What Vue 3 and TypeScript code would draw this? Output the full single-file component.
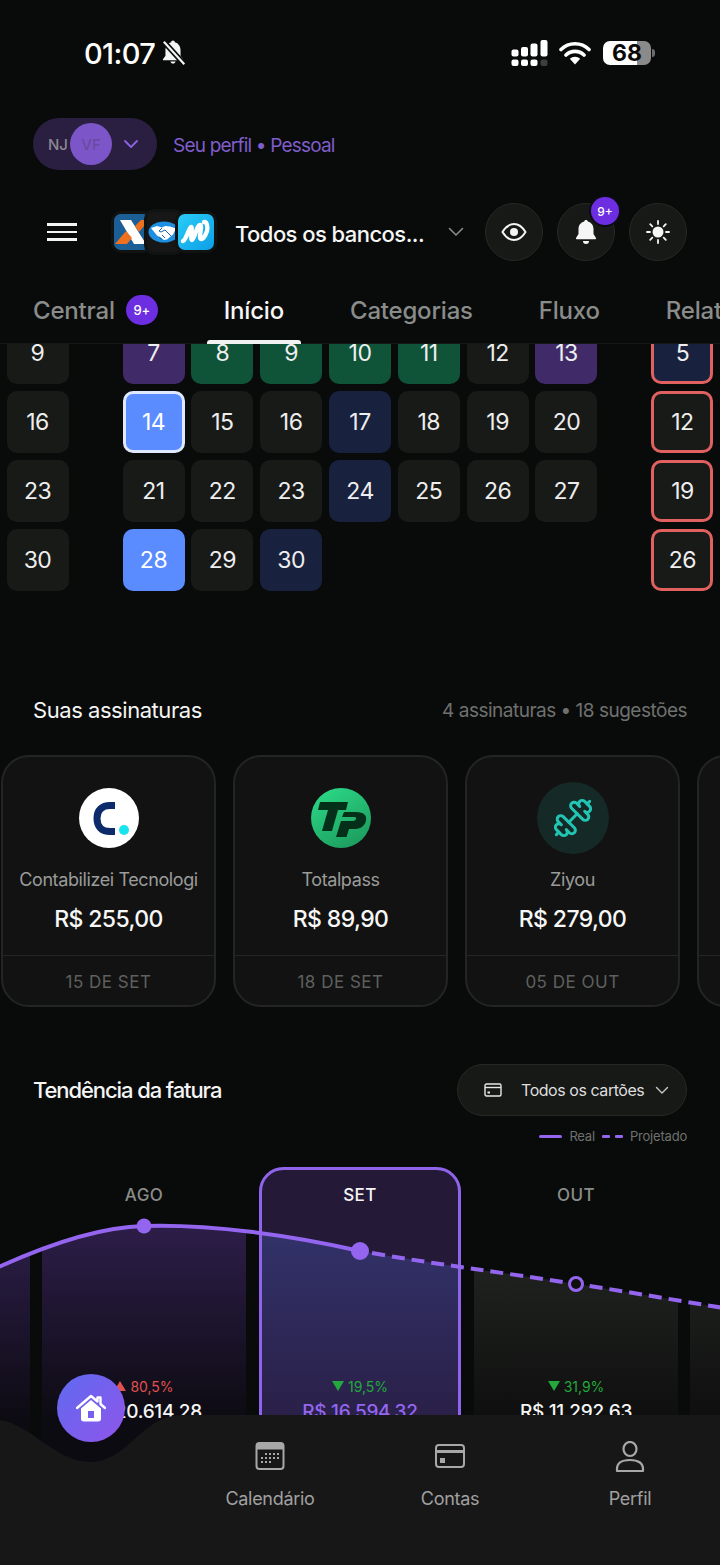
<script setup lang="ts">
interface Cell { n: number; tone?: string }
const leftCol: Cell[] = [{ n: 9 }, { n: 16 }, { n: 23 }, { n: 30 }]
const midCol: Cell[] = [
  { n: 7, tone: 'purple' }, { n: 8, tone: 'green' }, { n: 9, tone: 'green' }, { n: 10, tone: 'green' },
  { n: 11, tone: 'green' }, { n: 12 }, { n: 13, tone: 'purple' },
  { n: 14, tone: 'today' }, { n: 15 }, { n: 16 }, { n: 17, tone: 'navy' }, { n: 18 }, { n: 19 }, { n: 20 },
  { n: 21 }, { n: 22 }, { n: 23 }, { n: 24, tone: 'navy' }, { n: 25 }, { n: 26 }, { n: 27 },
  { n: 28, tone: 'blue' }, { n: 29 }, { n: 30, tone: 'navy' }
]
const rightCol: Cell[] = [
  { n: 5, tone: 'navy due' }, { n: 12, tone: 'due' }, { n: 19, tone: 'due' }, { n: 26, tone: 'due' }
]
const tabs = ['Início', 'Categorias', 'Fluxo', 'Relatórios']
const subs = [
  { kind: 'c', name: 'Contabilizei Tecnologi', price: 'R$ 255,00', date: '15 DE SET' },
  { kind: 'tp', name: 'Totalpass', price: 'R$ 89,90', date: '18 DE SET' },
  { kind: 'gym', name: 'Ziyou', price: 'R$ 279,00', date: '05 DE OUT' },
  { kind: '', name: '', price: '', date: '' }
]
const months = [
  { label: 'AGO', pct: '80,5%', up: true, value: 'R$ 20.614,28', sel: false },
  { label: 'SET', pct: '19,5%', up: false, value: 'R$ 16.594,32', sel: true },
  { label: 'OUT', pct: '31,9%', up: false, value: 'R$ 11.292,63', sel: false }
]
</script>

<template>
  <div class="screen">
    <header class="head">
      <div class="status">
        <div class="status-left">
          <span class="clock">01:07</span>
          <svg class="mute" width="30" height="28" viewBox="0 0 26 26">
            <path d="M13 1.500c-1 0-1.600.7-1.700 1.600C7.900 4 6 7 6 10.500v5l-2.300 3.200c-.3.5 0 1.100.6 1.100h17.400c.6 0 .9-.6.6-1.100L20 15.500v-5c0-3.500-1.900-6.500-5.300-7.400-.1-.9-.7-1.600-1.700-1.600z" fill="#f4f4f4"/>
            <path d="M10.500 21a2.600 2.600 0 0 0 5 0z" fill="#f4f4f4"/>
            <path d="M4 2l20 22" stroke="#0a0b0a" stroke-width="5"/>
            <path d="M4.500 2.500l19 21" stroke="#f4f4f4" stroke-width="2"/>
          </svg>
        </div>
        <div class="status-right">
          <svg width="37" height="26" viewBox="0 0 37 26">
            <g fill="#fff">
              <rect x="0.500" y="9.500" width="7" height="7" rx="2"/>
              <rect x="10" y="7" width="7" height="9.500" rx="2"/>
              <rect x="19.500" y="3.500" width="7" height="13" rx="2"/>
              <rect x="29.500" y="0" width="7" height="16.500" rx="2"/>
              <rect x="0.500" y="19.500" width="7" height="6.500" rx="2"/>
              <rect x="10" y="19.500" width="7" height="6.500" rx="2"/>
              <rect x="19.500" y="19.500" width="7" height="6.500" rx="2"/>
            </g>
            <rect x="29.500" y="19.500" width="7" height="6.500" rx="2" fill="#3e3e3e"/>
          </svg>
          <svg class="wifi" width="32" height="24" viewBox="0 0 32 24">
            <path d="M2 8.500a20 20 0 0 1 28 0M7 14a13 13 0 0 1 18 0" fill="none" stroke="#fff" stroke-width="3.600" stroke-linecap="round"/>
            <path d="M10.800 17.800a7.600 7.600 0 0 1 10.400 0L16 23.500z" fill="#fff"/>
          </svg>
          <div class="battery">
            <span class="battery-num">68</span>
          </div>
          <span class="battery-tip"></span>
        </div>
      </div>

      <div class="profile">
        <div class="profile-pill">
          <span class="initials">NJ</span>
          <span class="avatar">VF</span>
          <svg width="16" height="10" viewBox="0 0 16 10"><path d="M2 2l6 6 6-6" fill="none" stroke="#8d63e6" stroke-width="1.800" stroke-linecap="round" stroke-linejoin="round"/></svg>
        </div>
        <span class="profile-text">Seu perfil • Pessoal</span>
      </div>

      <div class="topbar">
        <div class="burger"><i></i><i></i><i></i></div>
        <div class="banks">
          <span class="bank bank-x">
            <svg width="36" height="36" viewBox="0 0 36 36">
              <rect width="36" height="36" rx="7" fill="#1c5f96"/>
              <path d="M6 6h11l15 24H20z" fill="#fff"/>
              <path d="M1 30l11-13 6 7-5 6z" fill="#f0701e"/>
              <path d="M21 12l6-6h8L25 18z" fill="#f0701e"/>
            </svg>
          </span>
          <span class="bank bank-mp">
            <svg width="32" height="22" viewBox="0 0 32 22">
              <ellipse cx="16" cy="11" rx="15.500" ry="10.500" fill="#1e8fe0"/>
              <path d="M3 7l6-2 5 1.500 3-1.500 5 .5 6 2-3 6-6 5-3 .5-7-4.500z" fill="#fff"/>
              <path d="M14 7l-3 3 2 1 4-2 6 6M11 16l3 2M14 14l3 3" fill="none" stroke="#1c5fa8" stroke-width="1"/>
            </svg>
          </span>
          <span class="bank bank-n">
            <svg width="36" height="36" viewBox="0 0 36 36">
              <path d="M5 27c3-1 6-13 8-14s-1 13 1 13 5-15 8-15-2 14 1 14 5-5 6-8 0-10-3-9" fill="none" stroke="#fff" stroke-width="4.400" stroke-linecap="round" stroke-linejoin="round"/>
            </svg>
          </span>
        </div>
        <span class="bank-label">Todos os bancos...</span>
        <svg class="bank-chev" width="16" height="10" viewBox="0 0 16 10"><path d="M1.500 1.500L8 8l6.500-6.500" fill="none" stroke="#8d8f8d" stroke-width="1.500" stroke-linecap="round" stroke-linejoin="round"/></svg>
        <div class="round">
          <svg width="26" height="20" viewBox="0 0 26 20">
            <path d="M1.500 10C4.500 5 8.500 2 13 2s8.500 3 11.500 8c-3 5-7 8-11.500 8S4.500 15 1.500 10z" fill="none" stroke="#f4f4f4" stroke-width="2"/>
            <circle cx="13" cy="10" r="4" fill="#f4f4f4"/>
          </svg>
        </div>
        <div class="round bell-wrap">
          <svg width="24" height="26" viewBox="0 0 24 26">
            <path d="M12 1c-1 0-1.700.7-1.800 1.500C6.500 3.500 4.500 6.500 4.500 10v5L2 19c-.3.600 0 1.200.7 1.200h18.600c.7 0 1-.6.700-1.200l-2.500-4v-5c0-3.500-2-6.500-5.700-7.500C13.700 1.700 13 1 12 1z" fill="#f6f6f6"/>
            <path d="M9 22a3 3 0 0 0 6 0z" fill="#f6f6f6"/>
          </svg>
          <span class="bell-badge">9+</span>
        </div>
        <div class="round">
          <svg width="24" height="24" viewBox="0 0 24 24">
            <circle cx="12" cy="12" r="5.500" fill="#f6f6f6"/>
            <path d="M12 1v3M12 20v3M1 12h3M20 12h3M4.200 4.200l2.100 2.100M17.700 17.700l2.100 2.100M4.200 19.800l2.100-2.100M17.700 6.300l2.100-2.100" stroke="#f6f6f6" stroke-width="1.800" stroke-linecap="round"/>
          </svg>
        </div>
      </div>

      <nav class="tabs">
        <div class="tab">Central <span class="tab-badge">9+</span></div>
        <div v-for="(t, i) in tabs" :key="t" class="tab" :class="{ active: i === 0 }">{{ t }}</div>
      </nav>
    </header>

    <main class="body">
      <section class="calendar">
        <div class="cal-side">
          <div v-for="c in leftCol" :key="c.n" class="cell">{{ c.n }}</div>
        </div>
        <div class="cal-mid">
          <div v-for="c in midCol" :key="c.n" class="cell" :class="c.tone">{{ c.n }}</div>
        </div>
        <div class="cal-side">
          <div v-for="c in rightCol" :key="c.n" class="cell" :class="c.tone">{{ c.n }}</div>
        </div>
      </section>

      <div class="subs-head">
        <h2 class="title">Suas assinaturas</h2>
        <span class="subs-count">4 assinaturas • 18 sugestões</span>
      </div>

      <div class="subs">
        <article v-for="(s, i) in subs" :key="i" class="sub">
          <div class="sub-top">
            <div class="logo-slot">
              <svg v-if="s.kind === 'c'" width="60" height="60" viewBox="0 0 60 60">
                <circle cx="30" cy="30" r="30" fill="#fff"/>
                <path d="M36 17.500h-5c-8 0-13 4.500-13 13s5 13 13 13h5" fill="none" stroke="#0d2a6b" stroke-width="7"/>
                <circle cx="45" cy="42" r="5" fill="#19e3ee"/>
              </svg>
              <svg v-else-if="s.kind === 'tp'" width="60" height="60" viewBox="0 0 60 60">
                <defs>
                  <linearGradient id="tpg" x1="0.200" y1="0" x2="0.800" y2="1">
                    <stop offset="0" stop-color="#2bd886"/>
                    <stop offset="1" stop-color="#1c9a5c"/>
                  </linearGradient>
                </defs>
                <circle cx="30" cy="30" r="30" fill="url(#tpg)"/>
                <path d="M9 14h28l-2 8h-8l-6 21H11l6-21H7z" fill="#04301a"/>
                <path d="M33 24h12c8 0 11 3.500 10 8.500-1 6-6 8.500-12 8.500h-5l-2.500 8H25l5-16h11c2 0 3.500-.6 4-2 .4-1.500-.5-2-2-2H31z" fill="#04301a"/>
              </svg>
              <div v-else-if="s.kind === 'gym'" class="gym">
                <svg width="42" height="42" viewBox="0 0 24 24" fill="none" stroke="#22c5b4" stroke-width="1.700" stroke-linecap="round" stroke-linejoin="round">
                  <g transform="translate(24 0) scale(-1 1)">
                    <path d="M14.400 14.400L9.600 9.600"/>
                    <path d="M18.657 21.485a2 2 0 1 1-2.829-2.828l-1.767 1.768a2 2 0 1 1-2.829-2.829l6.364-6.364a2 2 0 1 1 2.829 2.829l-1.768 1.767a2 2 0 1 1 2.828 2.829z"/>
                    <path d="M21.500 21.500l-1.400-1.400"/>
                    <path d="M3.900 3.900L2.500 2.500"/>
                    <path d="M6.404 12.768a2 2 0 1 1-2.829-2.829l1.768-1.767a2 2 0 1 1-2.828-2.829l2.828-2.828a2 2 0 1 1 2.829 2.828l1.767-1.768a2 2 0 1 1 2.829 2.829z"/>
                  </g>
                </svg>
              </div>
            </div>
            <div class="sub-name">{{ s.name }}</div>
            <div class="sub-price">{{ s.price }}</div>
          </div>
          <div class="sub-date">{{ s.date }}</div>
        </article>
      </div>

      <div class="trend-head">
        <h2 class="title trend-title">Tendência da fatura</h2>
        <div class="card-select">
          <svg class="cs-icon" width="18" height="14" viewBox="0 0 18 14" fill="none">
            <rect x="1" y="1" width="16" height="12" rx="1.500" stroke="#e8e8e8" stroke-width="1.400"/>
            <path d="M1 4.500h16" stroke="#e8e8e8" stroke-width="1.400"/>
            <rect x="3.500" y="8.500" width="2.500" height="2" fill="#e8e8e8"/>
          </svg>
          <span>Todos os cartões</span>
          <svg class="cs-icon" width="14" height="9" viewBox="0 0 14 9"><path d="M1.500 1.500L7 7l5.500-5.500" fill="none" stroke="#c8c8c8" stroke-width="1.400" stroke-linecap="round" stroke-linejoin="round"/></svg>
        </div>
      </div>

      <div class="legend">
        <i class="lg-solid"></i><span>Real</span>
        <i class="lg-dash"></i><i class="lg-dash"></i><span>Projetado</span>
      </div>

      <section class="chart">
        <svg class="chart-svg" width="720" height="300" viewBox="0 0 720 300">
          <defs>
            <clipPath id="under">
              <path d="M-10 104C50 76 100 60 144 59C210 57 290 68 360 84C440 98 500 105 576 117C630 125 680 134 730 142V300H-10z"/>
            </clipPath>
            <linearGradient id="gPurple" x1="0" y1="0" x2="0" y2="1">
              <stop offset="0" stop-color="#2d1e4a"/>
              <stop offset="0.800" stop-color="#0d0b12"/>
            </linearGradient>
            <linearGradient id="gSel" x1="0" y1="0" x2="0" y2="1">
              <stop offset="0" stop-color="#32326a"/>
              <stop offset="0.800" stop-color="#2a2048"/>
            </linearGradient>
            <linearGradient id="gGrey" x1="0" y1="0" x2="0" y2="1">
              <stop offset="0" stop-color="#212321"/>
              <stop offset="0.800" stop-color="#0d0e0d"/>
            </linearGradient>
          </defs>
          <rect x="259" y="0" width="202" height="320" rx="24" fill="#241a38"/>
          <g clip-path="url(#under)">
            <rect x="0" y="60" width="30" height="240" fill="url(#gPurple)"/>
            <rect x="42" y="55" width="204" height="245" fill="url(#gPurple)"/>
            <rect x="260" y="60" width="200" height="240" fill="url(#gSel)"/>
            <rect x="474" y="90" width="204" height="210" fill="url(#gGrey)"/>
            <rect x="690" y="90" width="30" height="210" fill="url(#gGrey)"/>
          </g>
          <rect x="260.500" y="1.500" width="199" height="320" rx="23" fill="none" stroke="#8f63ea" stroke-width="3"/>
          <path d="M-10 104C50 76 100 60 144 59C210 57 290 68 360 84" fill="none" stroke="#9466f0" stroke-width="4"/>
          <path d="M372 86C440 98 500 105 576 117C630 125 680 134 730 142" fill="none" stroke="#9466f0" stroke-width="4" stroke-dasharray="13 7"/>
          <circle cx="144" cy="59" r="7.500" fill="#9466f0"/>
          <circle cx="360" cy="84" r="9" fill="#9466f0"/>
          <circle cx="576" cy="117" r="6.500" fill="#0e0f0e" stroke="#9466f0" stroke-width="3"/>
        </svg>
        <div class="months">
          <div v-for="m in months" :key="m.label" class="month" :class="{ sel: m.sel }">
            <div class="m-label">{{ m.label }}</div>
            <div class="m-pct" :class="m.up ? 'up' : 'down'">
              <i class="tri"></i>{{ m.pct }}
            </div>
            <div class="m-value">{{ m.value }}</div>
          </div>
        </div>
      </section>
    </main>

    <footer class="nav">
      <svg class="nav-bg" width="720" height="150" viewBox="0 0 720 150">
        <path d="M0 5C32 10 56 47 90 47C128 47 142 0 182 0H720V150H0z" fill="#171717"/>
      </svg>
      <button class="fab" type="button" aria-label="Início">
        <svg width="30" height="28" viewBox="0 0 30 28">
          <path d="M1 14L15 2l6.500 5.500V3.500h3v6.500L29 14" fill="none" stroke="#fff" stroke-width="2.400" stroke-linecap="round" stroke-linejoin="round"/>
          <path fill-rule="evenodd" d="M15 6l10 8.500V25c0 1.500-1 2.500-2.500 2.500h-15C6 27.500 5 26.500 5 25V14.500zM12 17v7h6v-7z" fill="#fff"/>
        </svg>
      </button>
      <div class="nav-items">
        <div class="nav-item">
          <svg width="30" height="30" viewBox="0 0 30 30" fill="none">
            <rect x="1.500" y="2" width="27" height="26" rx="3" stroke="#a8a8a8" stroke-width="2"/>
            <path d="M1.500 5a3 3 0 0 1 3-3h21a3 3 0 0 1 3 3v3.500h-27z" fill="#a8a8a8"/>
            <g fill="#a8a8a8">
              <rect x="10" y="12" width="2" height="2"/><rect x="14" y="12" width="2" height="2"/><rect x="18" y="12" width="2" height="2"/><rect x="22" y="12" width="2" height="2"/>
              <rect x="6" y="16" width="2" height="2"/><rect x="10" y="16" width="2" height="2"/><rect x="14" y="16" width="2" height="2"/><rect x="18" y="16" width="2" height="2"/><rect x="22" y="16" width="2" height="2"/>
              <rect x="6" y="20" width="2" height="2"/><rect x="10" y="20" width="2" height="2"/><rect x="14" y="20" width="2" height="2"/>
            </g>
          </svg>
          <span>Calendário</span>
        </div>
        <div class="nav-item">
          <svg width="30" height="30" viewBox="0 0 30 30" fill="none">
            <rect x="1" y="4" width="28" height="22" rx="3" stroke="#a8a8a8" stroke-width="2"/>
            <path d="M1 10.500h28" stroke="#a8a8a8" stroke-width="3"/>
            <rect x="5" y="17" width="5" height="5" fill="#a8a8a8"/>
          </svg>
          <span>Contas</span>
        </div>
        <div class="nav-item">
          <svg width="30" height="32" viewBox="0 0 30 32" fill="none">
            <ellipse cx="15" cy="8" rx="6.500" ry="7" stroke="#a8a8a8" stroke-width="2.200"/>
            <path d="M2 30v-2c0-6 5-9 13-9s13 3 13 9v2z" stroke="#a8a8a8" stroke-width="2.200" stroke-linejoin="round"/>
          </svg>
          <span>Perfil</span>
        </div>
      </div>
    </footer>
  </div>
</template>

<style>
html, body { margin: 0; background: #090b0a; }
</style>

<style scoped>
.screen {
  position: relative;
  width: 720px;
  height: 1565px;
  overflow: hidden;
  background: #090b0a;
  color: #f4f4f4;
  font-family: "Inter", "Liberation Sans", sans-serif;
  display: flex;
  flex-direction: column;
}
.head {
  height: 344px;
  flex: none;
  border-bottom: 1px solid #151715;
  box-sizing: border-box;
  display: flex;
  flex-direction: column;
  position: relative;
  z-index: 2;
  background: #090b0a;
}
.status {
  height: 106px;
  flex: none;
  display: flex;
  align-items: center;
  justify-content: space-between;
  padding: 0 65px 0 84px;
}
.status-left { display: flex; align-items: center; gap: 3px; }
.clock { font-size: 29px; font-weight: 500; letter-spacing: -0.6px; color: #fff; }
.status-right { display: flex; align-items: center; }
.wifi { margin-left: 11px; }
.battery {
  margin-left: 12px;
  width: 48px;
  height: 24px;
  border-radius: 7px;
  background: linear-gradient(90deg, #fff 0 70%, #8a8a8a 70% 100%);
  display: flex;
  align-items: center;
  justify-content: center;
}
.battery-num { color: #0a0a0a; font-size: 23px; font-weight: 700; line-height: 24px; }
.battery-tip { width: 3px; height: 8px; margin-left: 1px; border-radius: 0 3px 3px 0; background: #6b6b6b; }

.profile { height: 52px; margin-top: 12px; padding-left: 33px; display: flex; align-items: center; flex: none; }
.profile-pill {
  width: 124px;
  height: 52px;
  border-radius: 26px;
  background: #2a1f40;
  display: flex;
  align-items: center;
  box-sizing: border-box;
  padding-left: 15px;
  flex: none;
}
.initials { font-size: 15px; font-weight: 500; color: #8c8794; width: 22px; }
.avatar {
  width: 42px;
  height: 42px;
  border-radius: 50%;
  background: #7c56c8;
  color: #6a4a9f;
  font-size: 15px;
  font-weight: 500;
  display: flex;
  align-items: center;
  justify-content: center;
  margin-right: 11px;
}
.profile-text { margin-left: 16px; padding-top: 2px; font-size: 19px; color: #7f5dcb; letter-spacing: -0.8px; white-space: nowrap; }

.topbar { height: 58px; margin-top: 33px; display: flex; align-items: center; flex: none; padding-left: 47px; }
.burger { width: 30px; display: flex; flex-direction: column; gap: 5px; flex: none; }
.burger i { height: 2.500px; background: #f4f4f4; display: block; }
.banks { display: flex; align-items: center; margin-left: 34px; flex: none; width: 106px; height: 58px; }
.bank {
  width: 36px;
  height: 36px;
  border-radius: 10px;
  border: 3px solid #111312;
  display: flex;
  align-items: center;
  justify-content: center;
  overflow: hidden;
  flex: none;
}
.bank-x { background: #1c5f96; position: relative; z-index: 1; }
.bank-mp { background: #161716; margin-left: -9px; width: 34px; height: 40px; position: relative; z-index: 2; }
.bank-n { background: linear-gradient(135deg, #29cdf6, #0d9ee8); margin-left: -9px; position: relative; z-index: 3; }
.bank-label { margin-left: 18px; padding-top: 3px; width: 190px; font-size: 22px; font-weight: 500; white-space: nowrap; flex: none; letter-spacing: -0.55px; color: #f7f7f7; }
.bank-chev { margin-left: 23px; flex: none; }
.round {
  width: 58px;
  height: 58px;
  box-sizing: border-box;
  border-radius: 50%;
  background: #171917;
  border: 1px solid #262826;
  display: flex;
  align-items: center;
  justify-content: center;
  margin-left: 14px;
  flex: none;
  position: relative;
}
.bank-chev + .round { margin-left: 21px; }
.bell-badge {
  position: absolute;
  top: -7px;
  right: -5px;
  width: 28px;
  height: 28px;
  border-radius: 50%;
  background: #6c2ee0;
  color: #fff;
  font-size: 12px;
  font-weight: 500;
  display: flex;
  align-items: center;
  justify-content: center;
  box-shadow: 0 0 0 2px #0c0c14;
}

.tabs { height: 83px; display: flex; gap: 32px; padding-left: 16px; overflow: hidden; flex: none; margin-bottom: -1px; }
.tab {
  position: relative;
  padding: 0 17px;
  height: 83px;
  display: flex;
  align-items: center;
  font-size: 24px;
  font-weight: 500;
  color: #8a8c8a;
  white-space: nowrap;
  padding-top: 15px;
  box-sizing: border-box;
  letter-spacing: -0.2px;
  flex: none;
}
.tab.active { color: #f7f7f7; }
.tab.active::after {
  content: "";
  position: absolute;
  left: 0;
  right: 0;
  bottom: 0;
  height: 4px;
  border-radius: 3px 3px 0 0;
  background: #f2f2f2;
}
.tab-badge {
  margin-left: 11px;
  width: 32px;
  height: 30px;
  border-radius: 15px;
  background: #6c2ee0;
  color: #fff;
  font-size: 13px;
  font-weight: 500;
  display: flex;
  align-items: center;
  justify-content: center;
}

.body { flex: 1; min-height: 0; overflow: hidden; }
.calendar { display: flex; gap: 54px; padding-left: 6.500px; margin-top: -22px; }
.cal-side { display: grid; grid-template-columns: 62px; row-gap: 7px; align-content: start; }
.cal-mid { display: grid; grid-template-columns: repeat(7, 62px); column-gap: 6.830px; row-gap: 7px; align-content: start; }
.cell {
  width: 62px;
  height: 62px;
  box-sizing: border-box;
  border-radius: 10px;
  background: #181a18;
  display: flex;
  align-items: center;
  justify-content: center;
  font-size: 23px;
  color: #eeeeee;
  letter-spacing: -0.5px;
}
.cell.purple { background: #402b68; }
.cell.green { background: #0f5338; }
.cell.navy { background: #18213e; }
.cell.blue { background: #5b8cff; color: #fff; }
.cell.today { background: #5b8cff; color: #fff; border: 3px solid #dfe8ff; }
.cell.due { border: 3px solid #e0615f; }

.subs-head { margin-top: 104px; height: 30px; padding: 0 33px; display: flex; align-items: center; justify-content: space-between; }
.title { margin: 0; font-size: 22px; font-weight: 400; color: #f5f5f5; letter-spacing: -0.45px; }
.trend-title { font-weight: 500; letter-spacing: -1.1px; }
.subs-count { font-size: 19px; color: #6f716f; letter-spacing: -0.5px; }

.subs { margin-top: 30px; padding-left: 1px; display: flex; gap: 17px; overflow: hidden; }
.sub {
  width: 215px;
  height: 252px;
  flex: none;
  box-sizing: border-box;
  border: 2px solid #232523;
  border-radius: 28px;
  background: #121212;
  display: flex;
  flex-direction: column;
}
.sub-top { height: 199px; box-sizing: border-box; border-bottom: 1px solid #232523; display: flex; flex-direction: column; align-items: center; flex: none; }
.logo-slot { height: 72px; margin-top: 25px; display: flex; align-items: center; justify-content: center; flex: none; }
.gym { width: 72px; height: 72px; border-radius: 50%; background: #152a27; display: flex; align-items: center; justify-content: center; }
.sub-name { margin-top: 14px; font-size: 18px; line-height: 24px; color: #9a9c9a; white-space: nowrap; letter-spacing: -0.4px; }
.sub-price { margin-top: 12px; font-size: 23px; line-height: 30px; font-weight: 500; color: #f7f7f7; letter-spacing: -0.6px; white-space: nowrap; }
.sub-date { flex: 1; display: flex; align-items: center; justify-content: center; padding-top: 3px; font-size: 17px; color: #5e605e; letter-spacing: 0.5px; }

.trend-head { margin-top: 57px; height: 52px; padding: 0 33px; display: flex; align-items: center; justify-content: space-between; }
.card-select {
  width: 230px;
  height: 52px;
  box-sizing: border-box;
  border: 1px solid #262826;
  border-radius: 26px;
  background: #171917;
  display: flex;
  align-items: center;
  padding: 0 18px 0 26px;
  font-size: 16px;
  color: #dedede;
  letter-spacing: -0.45px;
}
.cs-icon { flex: none; }
.card-select span { margin-left: 19px; margin-right: 11px; white-space: nowrap; }

.legend { margin-top: 12px; height: 16px; padding-right: 33px; display: flex; align-items: center; justify-content: flex-end; font-size: 13px; color: #6f716f; letter-spacing: -0.2px; }
.legend span { margin-left: 7px; }
.legend span + i { margin-left: 7px; }
.lg-solid { width: 23px; height: 3px; border-radius: 2px; background: #9466f0; display: block; }
.lg-dash { width: 8px; height: 3px; border-radius: 1px; background: #9466f0; display: block; margin-left: 5px; }

.chart { position: relative; margin-top: 23px; height: 300px; }
.chart-svg { position: absolute; inset: 0; display: block; }
.months { position: relative; display: flex; padding-left: 36px; height: 300px; }
.month { width: 216px; flex: none; display: flex; flex-direction: column; align-items: center; }
.m-label { height: 56px; line-height: 56px; font-size: 17px; font-weight: 500; color: #8a8c8a; letter-spacing: 0.4px; }
.month.sel .m-label { color: #f5f5f5; }
.m-pct { margin-top: 151px; height: 24px; display: flex; align-items: center; font-size: 14px; gap: 4px; }
.m-pct.up { color: #e0524f; }
.m-pct.down { color: #22a83c; }
.tri { width: 0; height: 0; border-left: 6px solid transparent; border-right: 6px solid transparent; display: block; }
.up .tri { border-bottom: 10px solid #e0524f; }
.down .tri { border-top: 10px solid #22a83c; }
.m-value { margin-top: 2px; height: 24px; line-height: 24px; font-size: 19px; font-weight: 500; color: #f5f5f5; white-space: nowrap; letter-spacing: -0.3px; }
.month.sel .m-value { color: #9466f0; }

.nav { position: absolute; left: 0; right: 0; bottom: 0; height: 150px; z-index: 3; }
.nav-bg { position: absolute; left: 0; top: 0; display: block; }
.fab {
  position: absolute;
  left: 57px;
  top: -41px;
  width: 68px;
  height: 68px;
  border-radius: 50%;
  border: 0;
  padding: 0;
  background: linear-gradient(135deg, #5f6af0, #8f55ea);
  display: flex;
  align-items: center;
  justify-content: center;
}
.nav-items { position: relative; display: flex; padding-left: 180px; }
.nav-item {
  width: 180px;
  height: 110px;
  display: flex;
  flex-direction: column;
  align-items: center;
  padding-top: 26px;
  font-size: 18px;
  color: #a0a0a0;
  letter-spacing: -0.3px;
  box-sizing: border-box;
}
.nav-item span { position: absolute; top: 72px; line-height: 24px; }
</style>
